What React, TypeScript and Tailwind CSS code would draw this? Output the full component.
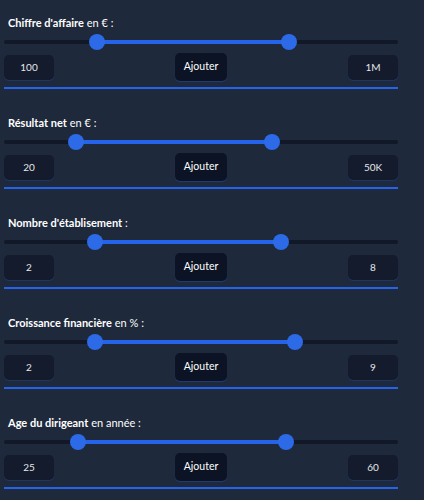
import React from 'react'

type Filter = {
  title: string
  unit: string
  min: string
  max: string
  low: number
  high: number
}

const filters: Filter[] = [
  { title: "Chiffre d'affaire", unit: 'en € :', min: '100', max: '1M', low: 97, high: 289 },
  { title: 'Résultat net', unit: 'en € :', min: '20', max: '50K', low: 76, high: 272 },
  { title: "Nombre d'établisement", unit: ':', min: '2', max: '8', low: 95, high: 281 },
  { title: 'Croissance financière', unit: 'en % :', min: '2', max: '9', low: 95, high: 295 },
  { title: 'Age du dirigeant', unit: 'en année :', min: '25', max: '60', low: 78, high: 286 },
]

function RangeSlider({ low, high }: { low: number; high: number }) {
  // thumb centers in page px, track starts at x=4
  const a = low - 4
  const b = high - 4
  return (
    <div className="relative mt-[10px] h-[4px] w-full rounded-full bg-[#111827]">
      <div className="absolute top-0 h-[4px] bg-[#2563eb]" style={{ left: a, width: b - a }} />
      <div className="absolute top-[-6px] h-[16px] w-[16px] rounded-full bg-[#2c6ae8]" style={{ left: a - 8 }} />
      <div className="absolute top-[-6px] h-[16px] w-[16px] rounded-full bg-[#2c6ae8]" style={{ left: b - 8 }} />
    </div>
  )
}

function FilterBlock({ f }: { f: Filter }) {
  return (
    <div className="flex h-[100px] w-[402px] flex-col pl-[4px] pr-[4px] pt-[16px]">
      <div className="h-[14px] pl-[4px] text-[11px] leading-[14px] text-white">
        <span className="font-bold">{f.title}</span> {f.unit}
      </div>
      <RangeSlider low={f.low} high={f.high} />
      <div className="mt-[9px] flex h-[28px] items-center justify-between">
        <div className="flex h-[25px] w-[50px] items-center justify-center rounded-[5px] bg-[#131b2c] text-[10px] text-[#e5e7eb] shadow-[0_1px_1px_rgba(37,99,235,0.25)]">
          {f.min}
        </div>
        <button className="flex h-[28px] w-[52px] items-center justify-center rounded-[5px] bg-[#0c1324] text-[10.5px] text-white shadow-[0_1px_1px_rgba(37,99,235,0.35)]">
          Ajouter
        </button>
        <div className="flex h-[25px] w-[50px] items-center justify-center rounded-[5px] bg-[#131b2c] text-[10px] text-[#e5e7eb] shadow-[0_1px_1px_rgba(37,99,235,0.25)]">
          {f.max}
        </div>
      </div>
      <div className="mt-[6px] h-[2px] bg-[#2563eb]" />
    </div>
  )
}

export default function App() {
  return (
    <div className="h-[500px] w-[424px] overflow-hidden bg-[#1e293b] font-['Lato',sans-serif]">
      {filters.map((f) => (
        <FilterBlock key={f.title} f={f} />
      ))}
    </div>
  )
}
